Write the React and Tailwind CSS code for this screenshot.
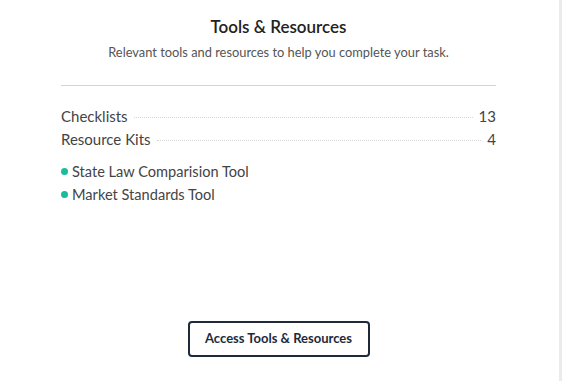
export default function App() {
  const rows = [
    { label: "Checklists", value: "13" },
    { label: "Resource Kits", value: "4" },
  ];
  const tools = ["State Law Comparision Tool", "Market Standards Tool"];
  return (
    <div className="flex h-[381px] w-[563px] bg-white" style={{ fontFamily: "Lato, 'Open Sans', sans-serif" }}>
      <div className="flex h-full w-[562px] flex-col items-center border-r-[3px] border-[#ebebeb] pt-[16px] pr-[2px]">
        <h2 className="text-[17px] font-semibold leading-[22px] text-[#222]">Tools &amp; Resources</h2>
        <p className="mt-[5px] text-[12.85px] leading-[18px] text-[#555]">
          Relevant tools and resources to help you complete your task.
        </p>
        <div className="mt-[24px] h-px w-[435px] bg-[#d4d4d4]" />
        <div className="mt-[19px] flex w-[435px] flex-col">
          {rows.map((r) => (
            <div key={r.label} className="flex h-[23px] items-center text-[15px] text-[#444]">
              <span>{r.label}</span>
              <span className="mx-[6px] mt-[2px] flex-1 border-b border-dotted border-[#d6d6d6]" />
              <span>{r.value}</span>
            </div>
          ))}
          <div className="mt-[9px] flex flex-col">
            {tools.map((t) => (
              <div key={t} className="flex h-[23px] items-center text-[14.6px] text-[#444]">
                <span className="mr-[4px] h-[7px] w-[7px] rounded-full bg-[#1bbc9b]" />
                <span>{t}</span>
              </div>
            ))}
          </div>
        </div>
        <div className="flex-1" />
        <button className="mb-[24px] h-[36px] w-[182px] rounded-[4px] border-2 border-[#1e2a3b] text-[13px] font-bold text-[#1e2a3b]">
          Access Tools &amp; Resources
        </button>
      </div>
    </div>
  );
}
